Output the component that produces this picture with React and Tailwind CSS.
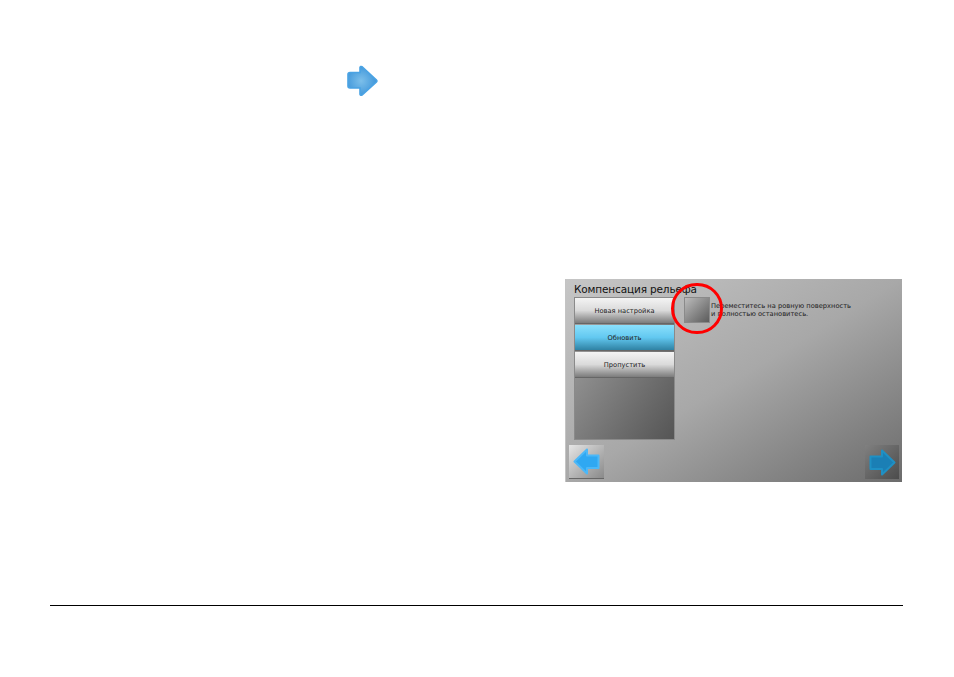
const font = { fontFamily: '"DejaVu Sans", sans-serif' }

function ArrowRight() {
  return (
    <svg width="32" height="32" viewBox="0 0 32 32" className="block">
      <defs>
        <radialGradient id="arrowFill" cx="45%" cy="50%" r="55%">
          <stop offset="0%" stopColor="#7cbfea" />
          <stop offset="100%" stopColor="#3f96da" />
        </radialGradient>
      </defs>
      <path
        d="M3 7.5 H13 V2.5 Q13.5 1 15 1.7 L29.5 15 Q30.5 16 29.5 17 L15 30 Q13.5 30.8 13 29.3 V23 H3 Q1 23 1 21 V9.5 Q1 7.5 3 7.5 Z"
        fill="url(#arrowFill)"
        stroke="#4aa3e4"
        strokeWidth="1.6"
      />
    </svg>
  )
}

function NavArrow({ flip, color, edge }) {
  return (
    <svg width="27" height="27" viewBox="0 0 27 27" className={flip ? 'block -scale-x-100' : 'block'}>
      <path
        d="M1.5 7.5 H13 V1.5 L25.5 13.5 L13 25.5 V20 H1.5 Z"
        fill={color}
        stroke={edge}
        strokeWidth="2"
        strokeLinejoin="round"
      />
    </svg>
  )
}

function MenuButton({ label, active }) {
  return (
    <div
      className={`h-[26px] pt-px flex items-center justify-center text-[6.7px] text-[#222] border-b border-[#666] ${
        active
          ? 'bg-gradient-to-b from-[#8ae0fc] via-[#62c8f0] to-[#2f82a4]'
          : 'bg-gradient-to-b from-[#f4f4f4] via-[#dadada] to-[#7c7c7c]'
      }`}
    >
      {label}
    </div>
  )
}

export default function App() {
  return (
    <div className="w-[954px] h-[677px] bg-white overflow-hidden">
      <div className="pt-[65px] pl-[347px] h-[279px]">
        <ArrowRight />
      </div>

      <div className="pl-[565px]">
        <div
          style={font}
          className="relative w-[337px] h-[203px] bg-gradient-to-br from-[#c6c6c6] via-[#a8a8a8] to-[#6c6c6c] border-l border-[#c4c4c4] flex flex-col"
        >
          <div className="pl-[8px] h-[18px] text-[10.5px] leading-[21px] tracking-[-0.15px] text-[#111] whitespace-nowrap">
            Компенсация рельефа
          </div>

          <div className="flex items-start">
            <div className="ml-[8px] w-[101px] h-[143px] flex flex-col gap-px border border-[#8a8a8a] bg-gradient-to-br from-[#a8a8a8] to-[#555555]">
              <MenuButton label="Новая настройка" />
              <MenuButton label="Обновить" active />
              <MenuButton label="Пропустить" />
            </div>

            <div className="ml-[9px] w-[26px] h-[26px] border border-[#8a8a8a] bg-gradient-to-br from-[#bcbcbc] to-[#5c5c5c]" />

            <div className="ml-[1px] mt-[5px] text-[6.7px] leading-[8px] text-[#222] whitespace-nowrap">
              <div>Переместитесь на ровную поверхность</div>
              <div>и полностью остановитесь.</div>
            </div>
          </div>

          <div className="mt-[5px] pl-[3px] pr-[3px] flex justify-between">
            <div className="w-[35px] h-[34px] flex items-center justify-center border-b border-[#666] bg-gradient-to-br from-[#e6e6e6] to-[#8a8a8a]">
              <NavArrow flip color="#2fa8f2" edge="#4cb8f8" />
            </div>
            <div className="w-[34px] h-[34px] flex items-center justify-center bg-gradient-to-br from-[#808080] to-[#4c4c4c]">
              <NavArrow color="#1b7fb5" edge="#1f90c4" />
            </div>
          </div>

          {/* red marker round the tile */}
          <div className="absolute left-[105px] top-[4px] w-[52px] h-[51px] rounded-full border-[3px] border-[#f00]" />
        </div>
      </div>

      <div className="mt-[122.5px] ml-[50px] w-[852.5px] h-px bg-black" />
    </div>
  )
}
